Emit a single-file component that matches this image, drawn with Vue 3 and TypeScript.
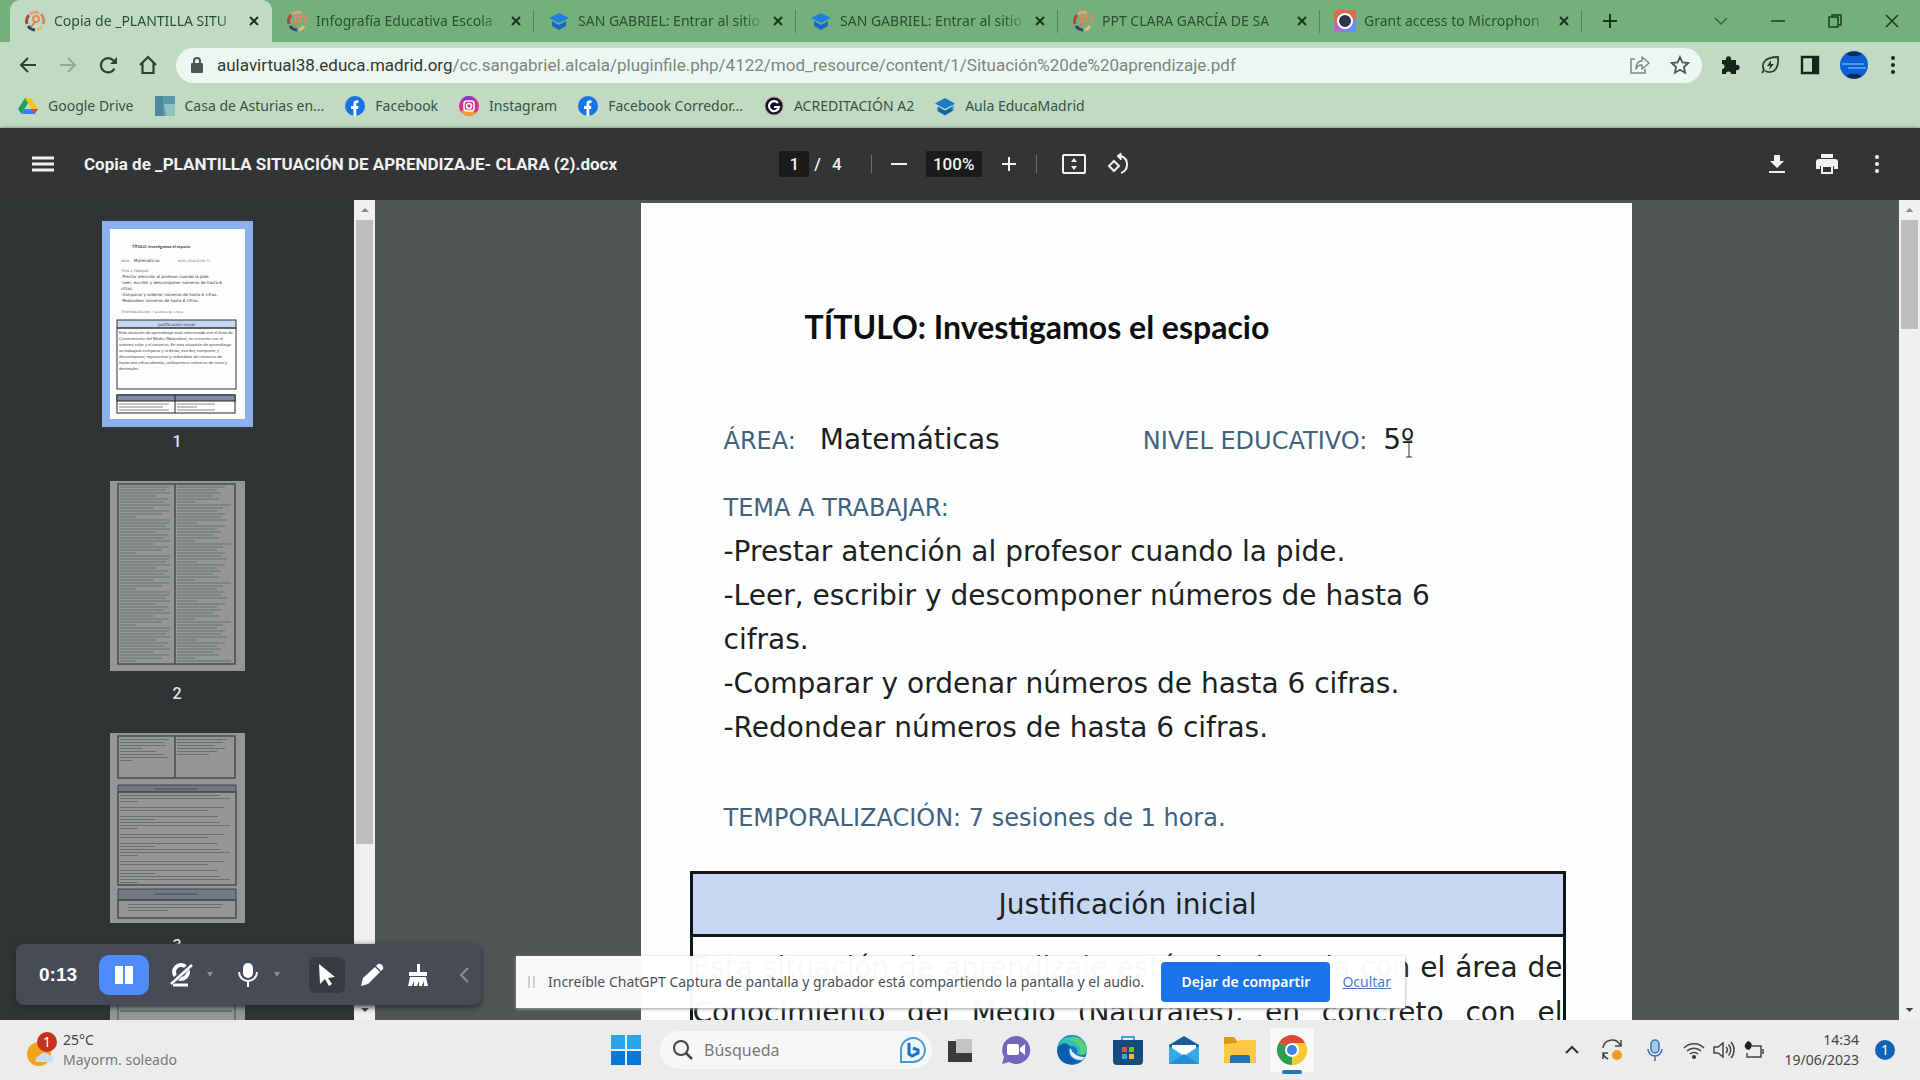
<script setup lang="ts">
import { ref } from 'vue'

type Favicon = 'school' | 'cap' | 'recorder'

interface Tab {
  title: string
  icon: Favicon
}

interface Bookmark {
  label: string
  icon: 'drive' | 'asturias' | 'facebook' | 'instagram' | 'g' | 'cap'
}

const tabs: Tab[] = [
  { title: 'Copia de _PLANTILLA SITU', icon: 'school' },
  { title: 'Infografía Educativa Escola', icon: 'school' },
  { title: 'SAN GABRIEL: Entrar al sitio', icon: 'cap' },
  { title: 'SAN GABRIEL: Entrar al sitio', icon: 'cap' },
  { title: 'PPT CLARA GARCÍA DE SA', icon: 'school' },
  { title: 'Grant access to Microphon', icon: 'recorder' },
]

const bookmarks: Bookmark[] = [
  { label: 'Google Drive', icon: 'drive' },
  { label: 'Casa de Asturias en...', icon: 'asturias' },
  { label: 'Facebook', icon: 'facebook' },
  { label: 'Instagram', icon: 'instagram' },
  { label: 'Facebook Corredor...', icon: 'facebook' },
  { label: 'ACREDITACIÓN A2', icon: 'g' },
  { label: 'Aula EducaMadrid', icon: 'cap' },
]

const active = ref(0)
const page = ref('1')
const zoom = ref('100%')
const query = ref('')

const goals: string[] = [
  '-Prestar atención al profesor cuando la pide.',
  '-Leer, escribir y descomponer números de hasta 6 cifras.',
  '-Comparar y ordenar números de hasta 6 cifras.',
  '-Redondear números de hasta 6 cifras.',
]

const summary: string[] = [
  'Esta situación de aprendizaje está relacionada con el área de',
  'Conocimiento del Medio (Naturales), en concreto con el',
  'sistema solar y el universo. En esta situación de aprendizaje',
  'se trabajará comparar y ordenar, escribir, componer y',
  'descomponer, representar y redondear de números de',
  'hasta seis cifras además, utilizaremos números de cinco y',
]

interface Stripe {
  x: number
  y: number
  w: number
}

// Line lengths follow a short repeating pattern so that each column reads as ragged text.
function column(x: number, top: number, bottom: number, widths: number[]): Stripe[] {
  const out: Stripe[] = []
  for (let y = top, i = 0; y < bottom; y += 3, i++) {
    out.push({ x, y, w: widths[i % widths.length] })
  }
  return out
}

const page2: Stripe[] = [
  ...column(10, 5, 180, [49, 46, 50, 36, 48, 44, 50, 34, 49, 42, 16, 50]),
  ...column(67, 5, 180, [48, 40, 44, 36, 42, 18, 54, 46, 40, 48, 44, 50, 20]),
]
const page3: Stripe[] = [
  ...column(10, 6, 30, [49, 44, 46, 22, 36, 44, 48, 12]),
  ...column(67, 6, 24, [50, 46, 38, 48, 40, 32]),
  ...column(10, 62, 150, [100, 110, 18, 0, 104, 88, 0, 98, 35]),
  ...column(18, 171, 180, [95, 93, 40]),
]
</script>

<template>
  <div class="desktop">
    <nav class="tabs" aria-label="Pestañas">
      <div v-for="(t, i) in tabs" :key="i" class="tab" :class="{ on: i === active }">
        <button class="tab-main" @click="active = i">
          <svg class="fav" viewBox="0 0 22 22" aria-hidden="true">
            <g v-if="t.icon === 'school'" fill="none" stroke-width="3">
              <path d="M3 14a9 9 0 0 1 2-9" stroke="#a34b45" />
              <path d="M6 4a9 9 0 0 1 9-1" stroke="#e8a07a" />
              <path d="M17 4a9 9 0 0 1 2 10" stroke="#c98d6b" />
              <path d="M4 16a9 9 0 0 0 7 4" stroke="#27456e" />
              <path d="M13 20a9 9 0 0 0 5-4" stroke="#e4bd7c" />
              <circle cx="12" cy="9" r="3" stroke="#e28a5a" stroke-width="2" />
              <path d="M11 12l-4 5" stroke="#d97b50" stroke-width="2" />
            </g>
            <g v-else-if="t.icon === 'cap'">
              <path d="M11 3L1 8l10 5 10-5z" fill="#1f7fe0" />
              <path d="M4 11v5l7 4 7-4v-5l-7 4z" fill="#1769c4" />
            </g>
            <g v-else>
              <rect width="22" height="22" rx="3" fill="#e06a4c" />
              <path d="M22 8v14H0z" fill="#6a8ff0" />
              <path d="M0 10v12h9z" fill="#b86ad0" />
              <circle cx="11" cy="11" r="7" fill="#2f3347" stroke="#fff" stroke-width="2" />
            </g>
          </svg>
          <span class="tab-title">{{ t.title }}</span>
        </button>
        <button class="tab-close" aria-label="Cerrar pestaña">
          <svg width="12" height="12" viewBox="0 0 12 12"><path d="M2 2l8 8M10 2l-8 8" stroke="currentColor" stroke-width="2" /></svg>
        </button>
      </div>
      <button class="plus" aria-label="Nueva pestaña">
        <svg width="16" height="16" viewBox="0 0 16 16"><path d="M8 1v14M1 8h14" stroke="currentColor" stroke-width="2" /></svg>
      </button>
      <div class="win">
        <button aria-label="Buscar pestañas"><svg width="16" height="16" viewBox="0 0 16 16"><path d="M2 5l6 6 6-6" fill="none" stroke="#2f6b3a" stroke-width="1.5" /></svg></button>
        <button aria-label="Minimizar"><svg width="16" height="16" viewBox="0 0 16 16"><path d="M1 8h14" stroke="#173d20" stroke-width="1.5" /></svg></button>
        <button aria-label="Restaurar"><svg width="16" height="16" viewBox="0 0 16 16"><path d="M2 4h9v10H2zM5 4V2h9v10h-3" fill="none" stroke="#173d20" stroke-width="1.5" stroke-linejoin="round" /></svg></button>
        <button aria-label="Cerrar"><svg width="16" height="16" viewBox="0 0 16 16"><path d="M2 2l12 12M14 2L2 14" stroke="#173d20" stroke-width="1.5" /></svg></button>
      </div>
    </nav>

    <div class="toolbar">
      <button class="nav" aria-label="Atrás"><svg width="20" height="20" viewBox="0 0 20 20"><path d="M18 10H3M10 3l-7 7 7 7" fill="none" stroke="#2c4232" stroke-width="2" /></svg></button>
      <button class="nav" aria-label="Adelante"><svg width="20" height="20" viewBox="0 0 20 20"><path d="M2 10h15M10 3l7 7-7 7" fill="none" stroke="#8fab94" stroke-width="2" /></svg></button>
      <button class="nav" aria-label="Recargar"><svg width="20" height="20" viewBox="0 0 20 20"><path d="M16.5 13.5A7.2 7.2 0 1 1 15.500 5.500L18 8" fill="none" stroke="#2c4232" stroke-width="2.200" /><path d="M19 2v7h-7z" fill="#2c4232" /></svg></button>
      <button class="nav" aria-label="Inicio"><svg width="20" height="20" viewBox="0 0 20 20"><path d="M2 10l8-8 8 8M4.500 8v10h11V8" fill="none" stroke="#2c4232" stroke-width="2.200" /></svg></button>
      <div class="omni">
        <svg width="14" height="18" viewBox="0 0 14 18" aria-hidden="true"><rect x="1" y="7" width="12" height="10" rx="1" fill="#4c5651" /><path d="M4 8V5a3 3 0 0 1 6 0v3" fill="none" stroke="#4c5651" stroke-width="2" /></svg>
        <a class="url" href="#"><span>aulavirtual38.educa.madrid.org</span>/cc.sangabriel.alcala/pluginfile.php/4122/mod_resource/content/1/Situación%20de%20aprendizaje.pdf</a>
        <button aria-label="Compartir"><svg width="20" height="20" viewBox="0 0 20 20"><path d="M5 4H1v14h14v-4" fill="none" stroke="#7d8882" stroke-width="1.500" /><path d="M12 2l7 6-7 6v-4c-3 0-5 1-6 4 0-5 2-8 6-8z" fill="none" stroke="#7d8882" stroke-width="1.500" stroke-linejoin="round" /></svg></button>
        <button aria-label="Añadir a marcadores"><svg width="20" height="20" viewBox="0 0 20 20"><path d="M10 2l2.400 5.400 5.900.6-4.400 4 1.200 5.800L10 14.800l-5.100 3 1.200-5.800-4.400-4 5.900-.6z" fill="none" stroke="#4c5651" stroke-width="1.800" /></svg></button>
      </div>
      <div class="exts">
        <button aria-label="Extensiones"><svg width="20" height="20" viewBox="0 0 20 20"><path d="M2 5h4a2.700 2.700 0 1 1 5 0h5v5a2.700 2.700 0 1 1 0 5v4h-5a2.500 2.500 0 1 0-5 0H2v-5a2.500 2.500 0 1 0 0-5z" fill="#17241b" /></svg></button>
        <button aria-label="Ahorro de energía"><svg width="20" height="20" viewBox="0 0 20 20"><path d="M2 18l2-3C1 9 4 2 18 2c1 11-4 18-13 14" fill="none" stroke="#2c4232" stroke-width="1.800" /><path d="M11 5l-4 6h3l-1 4 5-6h-3z" fill="#2c4232" /></svg></button>
        <button aria-label="Panel lateral"><svg width="20" height="20" viewBox="0 0 20 20"><path d="M2 2h16v16H2z" fill="none" stroke="#17241b" stroke-width="2.400" /><path d="M12 2h6v16h-6z" fill="#17241b" /></svg></button>
        <button aria-label="Perfil"><svg width="28" height="28" viewBox="0 0 28 28"><circle cx="14" cy="14" r="14" fill="#0b5fd8" /><path d="M6 3a14 14 0 0 1 16 0l-4 2h-8zM6 25a14 14 0 0 0 16 0l-4-2h-8z" fill="#0d2a52" /><path d="M2 13h22M8 17h18" stroke="#4f9bea" stroke-width="2" /></svg></button>
        <button aria-label="Menú"><svg width="6" height="20" viewBox="0 0 6 20" fill="#17241b"><circle cx="3" cy="3" r="2" /><circle cx="3" cy="10" r="2" /><circle cx="3" cy="17" r="2" /></svg></button>
      </div>
    </div>

    <nav class="bookmarks" aria-label="Marcadores">
      <a v-for="(b, i) in bookmarks" :key="i" href="#">
        <svg width="20" height="20" viewBox="0 0 20 20" aria-hidden="true">
          <g v-if="b.icon === 'drive'"><path d="M7 2h6l-6.500 11L3.500 18 0 13z" fill="#1ca25b" /><path d="M7 2h6l7 11h-6.500z" fill="#fbc116" /><path d="M6.500 13H20l-3.500 5h-13z" fill="#3e7ff0" /><path d="M16.500 18L20 13h-6z" fill="#e2452f" /></g>
          <g v-else-if="b.icon === 'asturias'"><rect width="20" height="20" fill="#5a9aa8" /><path d="M9 8h11v12h-9z" fill="#8fc3bd" /><path d="M0 0h8v20H0z" fill="#4b8a9c" /></g>
          <g v-else-if="b.icon === 'facebook'"><circle cx="10" cy="10" r="10" fill="#1673e6" /><path d="M8.500 20v-7H6v-3h2.500V8c0-3 1.500-4 5-3.600V7c-2-.2-2.200.2-2.200 1.500V10h2.200l-.5 3h-1.700v7z" fill="#fff" /></g>
          <g v-else-if="b.icon === 'instagram'"><circle cx="10" cy="10" r="10" fill="#d6308a" /><path d="M2 16a10 10 0 0 0 15 1C13 12 6 11 2 16z" fill="#f79a3e" /><path d="M3 3a10 10 0 0 1 13-1C12 6 6 7 3 3z" fill="#8a3bd0" /><rect x="5" y="5" width="10" height="10" rx="3" fill="none" stroke="#fff" stroke-width="1.500" /><circle cx="10" cy="10" r="2.500" fill="none" stroke="#fff" stroke-width="1.500" /></g>
          <g v-else-if="b.icon === 'g'"><circle cx="10" cy="10" r="9" fill="#17122b" stroke="#b58a8c" /><path d="M14 7a5 5 0 1 0 1 4h-5" fill="none" stroke="#fff" stroke-width="2.200" /></g>
          <g v-else><path d="M10 2L0 7.500 10 13l10-5.500z" fill="#1b7cc4" /><path d="M3 11v4l7 4 7-4v-4l-7 4zM18 8v7" fill="#135f9d" stroke="#1b7cc4" /></g>
        </svg>
        <span>{{ b.label }}</span>
      </a>
    </nav>

    <header class="pdfbar">
      <div class="pdf-left">
        <button aria-label="Menú lateral"><svg width="22" height="16" viewBox="0 0 22 16"><path d="M0 2h22M0 8h22M0 14h22" stroke="#f1f1f1" stroke-width="3" /></svg></button>
        <h1>Copia de _PLANTILLA SITUACIÓN DE APRENDIZAJE- CLARA (2).docx</h1>
      </div>
      <div class="pdf-mid">
        <input v-model="page" class="pageno" aria-label="Página" />
        <span class="total"><span>/</span><span>4</span></span>
        <i class="sep"></i>
        <button aria-label="Alejar"><svg width="20" height="20" viewBox="0 0 20 20"><path d="M2 10h16" stroke="#f1f1f1" stroke-width="2" /></svg></button>
        <input v-model="zoom" class="zoom" aria-label="Zoom" />
        <button aria-label="Acercar"><svg width="20" height="20" viewBox="0 0 20 20"><path d="M3 10h14M10 3v14" stroke="#f1f1f1" stroke-width="2" /></svg></button>
        <i class="sep"></i>
        <button class="fit" aria-label="Ajustar a la página"><svg width="24" height="20" viewBox="0 0 24 20"><rect x="1" y="1" width="22" height="18" rx="1" fill="none" stroke="#f1f1f1" stroke-width="2" /><path d="M12 4l3 4H9zM12 16l3-4H9z" fill="#f1f1f1" /></svg></button>
        <button aria-label="Girar"><svg width="24" height="24" viewBox="0 0 24 24" fill="none" stroke="#f1f1f1" stroke-width="2"><path d="M7 9l5 5-5 5-5-5zM14 21a9 9 0 0 0 0-17h-3" /><path d="M14 1l-4 3 4 4z" fill="#f1f1f1" stroke-width="1" /></svg></button>
      </div>
      <div class="pdf-right">
        <button aria-label="Descargar"><svg width="16" height="20" viewBox="0 0 16 20" fill="#f1f1f1"><path d="M5 1h6v6h4l-7 7-7-7h4zM0 17h16v2H0z" /></svg></button>
        <button aria-label="Imprimir"><svg width="22" height="20" viewBox="0 0 22 20" fill="#f1f1f1"><path d="M5 0h12v4H5zM3 5h16a3 3 0 0 1 3 3v7h-4v-3H4v3H0V8a3 3 0 0 1 3-3z" /><path d="M5 12h12v8H5zM7 13v5h8v-5z" fill-rule="evenodd" /></svg></button>
        <button class="more" aria-label="Más acciones"><svg width="6" height="20" viewBox="0 0 6 20" fill="#f1f1f1"><circle cx="3" cy="3" r="2" /><circle cx="3" cy="10" r="2" /><circle cx="3" cy="17" r="2" /></svg></button>
      </div>
    </header>

    <div class="viewer">
      <aside class="side">
        <div class="thumbs">
          <figure class="thumb on">
            <svg viewBox="0 0 135 190" aria-hidden="true">
              <rect width="135" height="190" fill="#fdfdfe" />
              <g font-family="DejaVu Sans, sans-serif" font-size="4" fill="#333">
                <text x="22" y="19" font-weight="bold" font-family="Lato, sans-serif">TÍTULO: Investigamos el espacio</text>
                <text x="11" y="33" font-size="3" fill="#52708f">ÁREA:</text>
                <text x="24" y="33">Matemáticas</text>
                <text x="68" y="33" font-size="3" fill="#52708f">NIVEL EDUCATIVO: 5º</text>
                <text x="11" y="43" font-size="3" fill="#52708f">TEMA A TRABAJAR:</text>
                <text x="11" y="49">{{ goals[0] }}</text>
                <text x="11" y="55">-Leer, escribir y descomponer números de hasta 6</text>
                <text x="11" y="61">cifras.</text>
                <text x="11" y="67">{{ goals[2] }}</text>
                <text x="11" y="73">{{ goals[3] }}</text>
                <text x="11" y="84" font-size="3" fill="#52708f">TEMPORALIZACIÓN: 7 sesiones de 1 hora.</text>
                <rect x="7" y="91" width="119" height="8" fill="#c6d7f3" stroke="#333" />
                <rect x="7" y="99" width="119" height="61" fill="none" stroke="#333" />
                <text x="48" y="97">Justificación inicial</text>
                <text v-for="(s, i) in summary" :key="i" x="9" :y="105 + i * 6" font-family="Noto Sans, sans-serif">{{ s }}</text>
                <text x="9" y="141" font-family="Noto Sans, sans-serif">decimales.</text>
              </g>
              <rect x="7" y="166" width="118" height="18" fill="#fff" stroke="#222" />
              <rect x="7" y="166" width="118" height="6" fill="#7f8cab" stroke="#222" />
              <path d="M65 166v18" stroke="#222" />
              <path d="M9 175h50M9 178h44M9 181h50M67 175h38M67 178h20M67 181h38" stroke="#888" />
            </svg>
            <figcaption>1</figcaption>
          </figure>
          <figure class="thumb">
            <svg viewBox="0 0 135 190" aria-hidden="true">
              <rect width="135" height="190" fill="#949796" />
              <rect v-for="(s, i) in page2" :key="i" :x="s.x" :y="s.y" :width="s.w" height="2" fill="#7f8382" />
              <path d="M8 3h117v180H8zM65 3v180" fill="none" stroke="#474c4b" stroke-width="1.500" />
            </svg>
            <figcaption>2</figcaption>
          </figure>
          <figure class="thumb">
            <svg viewBox="0 0 135 190" aria-hidden="true">
              <rect width="135" height="190" fill="#949796" />
              <rect v-for="(s, i) in page3" :key="i" :x="s.x" :y="s.y" :width="s.w" height="1" fill="#6a6e6e" />
              <path d="M8 52h118v7H8zM8 156h118v11H8z" fill="#727985" stroke="#3d434c" />
              <path d="M45 56h42M45 161h42" stroke="#454b5c" />
              <path d="M8 3h117v42H8zM65 3v42M8 59h118v93H8zM8 167h118v18H8z" fill="none" stroke="#474c4b" stroke-width="1.500" />
            </svg>
            <figcaption>3</figcaption>
          </figure>
          <figure class="thumb">
            <svg viewBox="0 0 135 190" aria-hidden="true">
              <rect width="135" height="190" fill="#949796" />
              <path d="M8 3h117v180H8zM10 14h112M10 26h112" fill="none" stroke="#474c4b" />
            </svg>
          </figure>
        </div>
        <div class="scroll">
          <svg width="22" height="20" viewBox="0 0 22 20"><path d="M7 12l4-4 4 4z" fill="#8a8a8a" /></svg>
          <div class="track"><i class="grip long"></i></div>
          <svg width="22" height="20" viewBox="0 0 22 20"><path d="M7 8l4 4 4-4z" fill="#444" /></svg>
        </div>
      </aside>

      <main class="canvas">
        <article class="sheet">
          <h2>TÍTULO: Investigamos el espacio</h2>
          <div class="facts">
            <span class="blue">ÁREA:</span>
            <span class="area">Matemáticas</span>
            <span class="blue">NIVEL EDUCATIVO:</span>
            <span class="level">5º
              <svg class="ibeam" width="8" height="18" viewBox="0 0 8 18" aria-hidden="true"><path d="M1 1h6M4 1v16M1 17h6" stroke="#333" fill="none" /></svg>
            </span>
          </div>
          <p class="blue topic">TEMA A TRABAJAR:</p>
          <p v-for="g in goals" :key="g" class="goal">{{ g }}</p>
          <p class="blue time">TEMPORALIZACIÓN: 7 sesiones de 1 hora.</p>
          <table>
            <thead><tr><th scope="col">Justificación inicial</th></tr></thead>
            <tbody><tr><td><p v-for="s in summary" :key="s">{{ s }}</p></td></tr></tbody>
          </table>
        </article>
      </main>
      <div class="scroll">
        <svg width="21" height="20" viewBox="0 0 22 20"><path d="M7 12l4-4 4 4z" fill="#8a8a8a" /></svg>
        <div class="track"><i class="grip short"></i></div>
        <svg width="21" height="20" viewBox="0 0 22 20"><path d="M7 8l4 4 4-4z" fill="#444" /></svg>
      </div>

      <div class="recorder">
        <span class="clock">0:13</span>
        <button class="pause" aria-label="Pausar"><svg width="20" height="18" viewBox="0 0 20 18"><path d="M1 0h8v18H1zM11 0h8v18h-8z" fill="#fff" /></svg></button>
        <button class="cam" aria-label="Cámara"><svg width="24" height="24" viewBox="0 0 24 24"><circle cx="12" cy="9" r="7" fill="none" stroke="#fff" stroke-width="4" /><path d="M4 22h15" stroke="#fff" stroke-width="3" /><path d="M1 21L23 1" stroke="#464b56" stroke-width="5" /><path d="M2 21L23 2" stroke="#fff" stroke-width="2.500" /></svg></button>
        <i class="caret"></i>
        <button class="mic" aria-label="Micrófono"><svg width="20" height="24" viewBox="0 0 20 24"><rect x="5" y="0" width="10" height="15" rx="5" fill="#fff" /><path d="M1 9a9 9 0 0 0 18 0M10 18v6" fill="none" stroke="#fff" stroke-width="2" /></svg></button>
        <i class="caret"></i>
        <button class="pointer" aria-label="Puntero"><svg width="18" height="22" viewBox="0 0 18 22"><path d="M1 0l16 13-7 1 4 6-3 2-4-7-5 5z" fill="#fff" /></svg></button>
        <button class="pencil" aria-label="Lápiz"><svg width="24" height="24" viewBox="0 0 24 24" fill="#fff"><path d="M1 23l2-8L15 4l5 5L8 21zM16 3l2-2q2-1 4 1t1 4l-2 2z" /></svg></button>
        <button class="broom" aria-label="Borrar"><svg width="20" height="24" viewBox="0 0 20 24" fill="#fff"><path d="M9 1h3v8h7v4H1V9h8zM2 14h16l2 9h-4v-5l-2 5h-3v-5l-2 5H6v-5l-2 5H0z" /></svg></button>
        <button class="fold" aria-label="Contraer"><svg width="10" height="16" viewBox="0 0 10 16"><path d="M9 1L2 8l7 7" fill="none" stroke="#8b909b" stroke-width="2" /></svg></button>
      </div>

      <div class="share">
        <i class="handle"></i>
        <span>Increíble ChatGPT Captura de pantalla y grabador está compartiendo la pantalla y el audio.</span>
        <button>Dejar de compartir</button>
        <a href="#">Ocultar</a>
      </div>
    </div>

    <footer class="taskbar">
      <div class="weather">
        <svg width="32" height="36" viewBox="0 0 32 36" aria-hidden="true"><circle cx="13" cy="22" r="12" fill="#f3a01c" /><path d="M10 30a4 4 0 0 1 3-6 6 6 0 0 1 10-1 4 4 0 0 1 3 7z" fill="#c9dcf4" /><circle cx="21" cy="10" r="10" fill="#c5321f" /><text x="21" y="15" text-anchor="middle" font-size="14" font-family="Noto Sans, sans-serif" fill="#fff">1</text></svg>
        <p><b>25°C</b><br />Mayorm. soleado</p>
      </div>
      <div class="apps">
        <button class="start" aria-label="Inicio"><svg width="30" height="30" viewBox="0 0 30 30"><path d="M0 0h14v14H0zM16 0h14v14H16z" fill="#2ba4e8" /><path d="M0 16h14v14H0zM16 16h14v14H16z" fill="#0a78d4" /></svg></button>
        <label class="search">
          <svg width="20" height="20" viewBox="0 0 20 20" aria-hidden="true"><circle cx="8" cy="8" r="7" fill="none" stroke="#444" stroke-width="2" /><path d="M13 13l6 6" stroke="#444" stroke-width="2.500" /></svg>
          <input v-model="query" type="text" placeholder="Búsqueda" aria-label="Búsqueda" />
          <svg width="26" height="26" viewBox="0 0 26 26" aria-hidden="true"><path d="M1 25V12A12 12 0 1 1 13 25z" fill="#eef6fc" stroke="#4a9bd0" stroke-width="2" /><path d="M9 6v11l3 2 6-3v-3l-5-2" fill="none" stroke="#1b6fc0" stroke-width="3" /></svg>
        </label>
        <button aria-label="Vista de tareas"><svg width="24" height="24" viewBox="0 0 24 24"><path d="M0 3h24v21H0z" fill="#3a3a3a" /><path d="M8 1h16v14H8z" fill="#c4c4c4" /></svg></button>
        <button aria-label="Chat"><svg width="30" height="30" viewBox="0 0 30 30"><path d="M15 1a14 14 0 1 1-7 26l-7 2 2-7A14 14 0 0 1 15 1z" fill="#7266bd" /><rect x="6" y="9" width="12" height="11" rx="2" fill="#fff" /><path d="M19 13l5-4v11l-5-4z" fill="#fff" /></svg></button>
        <button aria-label="Edge"><svg width="32" height="32" viewBox="0 0 32 32"><circle cx="16" cy="16" r="15" fill="#1379c9" /><path d="M2 12a15 15 0 0 1 29 4c0 5-5 6-10 4 2-5-2-9-7-8s-9 3-12 0z" fill="#34bfae" /><path d="M17 3a14 14 0 0 1 14 13c0 4-4 5-7 4 2-8-3-13-12-14z" fill="#59cf7c" /><path d="M29 23a15 15 0 0 1-15-9c-2 6 3 13 12 12z" fill="#ececec" /><path d="M2 13c3-4 9-6 12 0-4 7 1 13 9 15C9 34-1 25 2 13z" fill="#0e5cab" /></svg></button>
        <button aria-label="Microsoft Store"><svg width="30" height="30" viewBox="0 0 30 30"><path d="M9 5V2h12v3" fill="none" stroke="#3fa5dd" stroke-width="2" /><path d="M0 5h30v21a4 4 0 0 1-4 4H4a4 4 0 0 1-4-4z" fill="#154c80" /><path d="M9 12h5v5H9z" fill="#e5533c" /><path d="M16 12h5v5h-5z" fill="#7fb83c" /><path d="M9 19h5v5H9z" fill="#3fa5dd" /><path d="M16 19h5v5h-5z" fill="#f4bb2e" /></svg></button>
        <button aria-label="Correo"><svg width="32" height="30" viewBox="0 0 32 30"><path d="M1 10L16 1l15 9v6H1z" fill="#1b5c9c" /><path d="M4 10h24v14H4z" fill="#fff" /><path d="M1 11l15 10 15-10v18H1z" fill="#37a9e8" /><path d="M1 29l15-10 15 10z" fill="#2290d8" /></svg></button>
        <button aria-label="Explorador"><svg width="32" height="30" viewBox="0 0 32 30"><path d="M0 2h10l3 4h19v6H0z" fill="#d99a1c" /><path d="M0 9l12-1 3-3h17v23H0z" fill="#fbc944" /><path d="M6 28v-6a2 2 0 0 1 2-2h16a2 2 0 0 1 2 2v6z" fill="#1f78b4" /></svg></button>
        <button class="current" aria-label="Chrome"><svg width="32" height="32" viewBox="0 0 32 32"><path d="M16 16L3 8.500a15 15 0 0 1 26 0z" fill="#de4a38" /><path d="M16 16l13-7.500A15 15 0 0 1 16 31z" fill="#f9c82f" /><path d="M16 16v15A15 15 0 0 1 3 8.500z" fill="#2f9c52" /><path d="M16 9h13.400a15 15 0 0 1-13.400 22l6-11.500z" fill="#f9c82f" /><circle cx="16" cy="16" r="7" fill="#fff" /><circle cx="16" cy="16" r="5" fill="#3f7fe8" /></svg></button>
      </div>
      <div class="tray">
        <svg width="14" height="10" viewBox="0 0 14 10"><path d="M1 8l6-6 6 6" fill="none" stroke="#333" stroke-width="2" /></svg>
        <svg class="update" width="22" height="22" viewBox="0 0 22 22"><path d="M2 9a9 9 0 0 1 17-3M20 1v6h-6M7 20a9 9 0 0 1-5-6M2 20v-6h5" fill="none" stroke="#444" stroke-width="1.500" /><circle cx="16" cy="16" r="5" fill="#f09c22" /></svg>
        <svg class="tmic" width="16" height="22" viewBox="0 0 16 22"><rect x="4" y="1" width="8" height="13" rx="4" fill="#a9c9ea" stroke="#3a6fb0" stroke-width="1.500" /><path d="M1 10a7 7 0 0 0 14 0M8 17v5" fill="none" stroke="#3a6fb0" stroke-width="1.500" /></svg>
        <svg class="wifi" width="22" height="18" viewBox="0 0 22 18"><path d="M1 7a14 14 0 0 1 20 0M4 10a10 10 0 0 1 14 0M7 13a6 6 0 0 1 8 0" fill="none" stroke="#444" stroke-width="1.500" /><circle cx="11" cy="16" r="2" fill="#333" /></svg>
        <svg width="22" height="18" viewBox="0 0 22 18"><path d="M1 6h4l5-4v14l-5-4H1zM13 6a4 4 0 0 1 0 6M15.500 3.500a8 8 0 0 1 0 11M18 1a12 12 0 0 1 0 16" fill="none" stroke="#444" stroke-width="1.500" /></svg>
        <svg width="22" height="18" viewBox="0 0 22 18"><path d="M9 5h9v11H4v-4M20 8v5" fill="none" stroke="#444" stroke-width="1.500" /><path d="M5 0c5 2 5 6 1 9C1 8 0 4 5 0z" fill="#222" /></svg>
        <p>14:34<br />19/06/2023</p>
        <span class="count">1</span>
      </div>
    </footer>
  </div>
</template>

<style>
body {
  margin: 0;
  overflow: hidden;
}
</style>

<style scoped>
.desktop {
  display: flex;
  flex-direction: column;
  height: 100vh;
  overflow: hidden;
  font-family: "Noto Sans", sans-serif;
  color: #333;
}
button {
  display: flex;
  align-items: center;
  justify-content: center;
  padding: 0;
  border: 0;
  background: none;
  font: inherit;
  color: inherit;
}
input {
  border: 0;
  padding: 0;
  font: inherit;
  color: inherit;
  background: none;
  min-width: 0;
}
a {
  color: inherit;
  text-decoration: none;
}
svg {
  flex: none;
  display: block;
}
p,
h1,
h2,
figure {
  margin: 0;
}

.tabs {
  display: flex;
  align-items: stretch;
  height: 42px;
  padding-left: 10px;
  background: #75b07b;
  color: #17351d;
}
.tab {
  display: flex;
  align-items: center;
  flex: 0 1 262px;
  min-width: 0;
  box-sizing: border-box;
  padding: 0 8px 0 14px;
  position: relative;
}
.tab + .tab::after {
  content: "";
  position: absolute;
  right: 0;
  top: 10px;
  height: 23px;
  width: 1px;
  background: #4c8a55;
}
.tab.on {
  background: #c1dbc3;
  border-radius: 10px 10px 0 0;
}
.tab-main {
  flex: 1;
  min-width: 0;
  gap: 8px;
  justify-content: flex-start;
}
.fav {
  width: 22px;
  height: 22px;
}
.tab-title {
  flex: 1;
  font-size: 14px;
  line-height: 20px;
  text-align: left;
  white-space: nowrap;
  overflow: hidden;
  color: #2a4f31;
  mask-image: linear-gradient(90deg, #000 86%, transparent);
}
.tab-close {
  width: 20px;
  height: 20px;
}
.plus {
  width: 56px;
}
.win {
  display: flex;
  margin-left: auto;
}
.win button {
  width: 57px;
}

.toolbar {
  display: flex;
  align-items: center;
  height: 46px;
  padding-left: 8px;
  background: #c1dbc3;
}
.nav {
  width: 40px;
  height: 36px;
}
.omni {
  display: flex;
  align-items: center;
  flex: 1;
  min-width: 0;
  height: 35px;
  margin-left: 8px;
  padding: 0 12px 0 14px;
  gap: 20px;
  border-radius: 18px;
  background: #edf6f0;
}
.url {
  flex: 1;
  min-width: 0;
  overflow: hidden;
  white-space: nowrap;
  font: 17px/26px Roboto, sans-serif;
  margin-left: -7px;
  color: #7a857f;
}
.url span {
  color: #2f3a34;
}
.exts {
  display: flex;
  align-items: center;
  gap: 20px;
  padding: 0 24px 0 18px;
}
.exts button:last-child {
  margin-left: 2px;
}

.bookmarks {
  display: flex;
  align-items: center;
  gap: 21px;
  height: 36px;
  padding: 0 0 4px 18px;
  background: #c1dbc3;
  font-size: 14px;
  line-height: 20px;
  color: #39513f;
}
.bookmarks a {
  display: flex;
  align-items: center;
  gap: 10px;
  white-space: nowrap;
}

.pdfbar {
  display: grid;
  grid-template-columns: 1fr auto 1fr;
  align-items: center;
  height: 72px;
  background: #323436;
  color: #f1f1f1;
  font-family: Roboto, sans-serif;
  font-size: 17px;
  font-weight: 500;
  line-height: 24px;
  box-shadow: 0 1px 4px #1c1e1f;
  position: relative;
}
.pdf-left {
  display: flex;
  align-items: center;
  gap: 30px;
  padding-left: 32px;
}
h1 {
  font: inherit;
  font-weight: bold;
  white-space: nowrap;
}
.pdf-mid {
  display: flex;
  align-items: center;
  gap: 17px;
  padding-right: 10px;
}
.pdf-mid input {
  height: 26px;
  text-align: center;
  background: #191b1c;
}
.pageno {
  width: 30px;
}
.zoom {
  width: 56px;
}
.total {
  display: flex;
  gap: 11px;
  margin-left: -12px;
  margin-right: 12px;
}
.sep {
  width: 1px;
  height: 18px;
  background: #6b6d6f;
}
.fit {
  margin: 0 4px 0 8px;
}
.pdf-right {
  display: flex;
  justify-content: flex-end;
  gap: 31px;
  padding-right: 40px;
}
.more {
  margin-left: 5px;
}

.viewer {
  position: relative;
  display: flex;
  flex: 1;
  min-height: 0;
  background: #525556;
}
.side {
  display: flex;
  width: 375px;
  background: #313435;
}
.thumbs {
  display: flex;
  flex: 1;
  flex-direction: column;
  align-items: center;
  padding-top: 29px;
  overflow: hidden;
}
.thumb {
  width: 135px;
  text-align: center;
}
.thumb svg {
  width: 135px;
  height: 190px;
}
.thumb.on svg {
  box-shadow: 0 0 0 8px #8ab0ee;
}
figcaption {
  height: 62px;
  box-sizing: border-box;
  padding-top: 13px;
  font: 500 16px/20px Roboto, sans-serif;
  color: #e4e4e4;
}
.scroll {
  display: flex;
  flex-direction: column;
  width: 21px;
  overflow: hidden;
  background: #eff0f1;
}
.track {
  display: flex;
  flex: 1;
  padding: 0 2px;
}
.grip {
  flex: 1;
  background: #bebec0;
}
.long {
  height: 80%;
}
.short {
  height: 14%;
}

.canvas {
  flex: 1;
  display: flex;
  justify-content: center;
  align-items: flex-start;
  overflow: hidden;
  padding: 3px 2px 0 0;
}
.sheet {
  width: 991px;
  box-sizing: border-box;
  padding: 102px 66px 0 83px;
  background: #fdfefe;
  font: 28px/45px "DejaVu Sans", sans-serif;
  color: #1d1f20;
}
h2 {
  margin-left: 81px;
  font: bold 32px/44px Lato, sans-serif;
  color: #0d0e0f;
}
.facts {
  display: flex;
  align-items: baseline;
  margin-top: 68px;
  white-space: nowrap;
}
.blue {
  font-size: 24px;
  color: #42627c;
}
.area {
  width: 323px;
  margin-left: 24px;
}
.level {
  position: relative;
  margin-left: 16px;
}
.ibeam {
  position: absolute;
  left: 22px;
  top: 23px;
}
.topic {
  margin-top: 22px;
  line-height: 44px;
}
.goal {
  max-width: 740px;
  line-height: 44px;
}
.time {
  margin-top: 46px;
}
table {
  width: 876px;
  margin: 30px 0 0 -34px;
  border-collapse: collapse;
}
th,
td {
  border: 3px solid #10151c;
  padding: 0;
}
th {
  height: 60px;
  font-weight: normal;
  background: #c6d7f4;
}
td p {
  text-align: justify;
  text-align-last: justify;
}
td {
  padding-top: 8px;
}

.recorder {
  position: absolute;
  left: 16px;
  bottom: 15px;
  display: flex;
  align-items: center;
  width: 465px;
  height: 61px;
  box-sizing: border-box;
  padding: 0 12px 0 23px;
  border-radius: 8px;
  background: #464b56;
  box-shadow: 0 2px 6px #25282c;
}
.clock {
  width: 60px;
  font: bold 19px/24px "Liberation Sans", sans-serif;
  color: #fff;
}
.pause {
  width: 50px;
  height: 40px;
  border-radius: 10px;
  background: #4f8cfb;
}
.cam {
  margin-left: 20px;
}
.caret {
  margin: 0 0 0 14px;
  border: 3px solid transparent;
  border-top: 5px solid #8b909b;
  border-bottom: 0;
}
.mic {
  margin-left: 25px;
}
.mic + .caret {
  margin-left: 16px;
}
.pointer {
  width: 36px;
  height: 36px;
  margin-left: 29px;
  border-radius: 6px;
  background: #373b45;
}
.pencil {
  margin-left: 15px;
}
.broom {
  margin-left: 24px;
}
.fold {
  margin-left: auto;
}

.share {
  position: absolute;
  left: 516px;
  bottom: 12px;
  display: flex;
  align-items: center;
  width: 889px;
  height: 52px;
  box-sizing: border-box;
  padding: 0 14px 0 12px;
  background: rgba(255, 255, 255, 0.97);
  box-shadow: 0 1px 3px #9a9c9e;
  font-size: 14px;
  line-height: 20px;
  color: #4d5156;
  white-space: nowrap;
}
.handle {
  width: 3px;
  height: 12px;
  margin-right: 13px;
  border: solid #cfcfcf;
  border-width: 0 2px;
}
.share button {
  width: 169px;
  height: 40px;
  margin-left: auto;
  border-radius: 4px;
  background: #1a73e8;
  font-weight: 600;
  color: #fff;
}
.share a {
  margin-left: 12px;
  color: #4c7fc0;
  text-decoration: underline;
}

.taskbar {
  display: grid;
  grid-template-columns: 1fr auto 1fr;
  align-items: center;
  height: 60px;
  background: #ececec;
  font-size: 14px;
  line-height: 20px;
}
.weather {
  display: flex;
  align-items: center;
  gap: 5px;
  padding-left: 26px;
  color: #777;
}
.weather b {
  font-weight: normal;
  color: #444;
}
.apps {
  display: flex;
  align-items: center;
  padding-right: 8px;
}
.apps button {
  width: 56px;
  height: 44px;
}
.search {
  display: flex;
  align-items: center;
  width: 272px;
  height: 38px;
  box-sizing: border-box;
  margin: 0 0 0 6px;
  padding: 0 6px 0 13px;
  border-radius: 19px;
  background: #f7f7f7;
}
.search input {
  flex: 1;
  margin-left: 11px;
  font-size: 16px;
}
.search input::placeholder {
  color: #777;
  opacity: 1;
}
.apps .current {
  position: relative;
  width: 44px;
  margin-left: 2px;
  border-radius: 4px;
  background: #f8f8f8;
}
.current::after {
  content: "";
  position: absolute;
  left: 12px;
  bottom: -2px;
  width: 20px;
  height: 4px;
  border-radius: 2px;
  background: #2378a8;
}
.tray {
  display: flex;
  align-items: center;
  justify-content: flex-end;
  gap: 8px;
  padding-right: 25px;
}
.update {
  margin-left: 14px;
}
.tmic {
  margin-left: 16px;
}
.wifi {
  margin-left: 12px;
}
.tray p {
  margin-left: 12px;
  text-align: right;
  color: #444;
}
.count {
  width: 20px;
  height: 20px;
  margin-left: 8px;
  border-radius: 50%;
  background: #0f63b8;
  text-align: center;
  color: #fff;
}
</style>
